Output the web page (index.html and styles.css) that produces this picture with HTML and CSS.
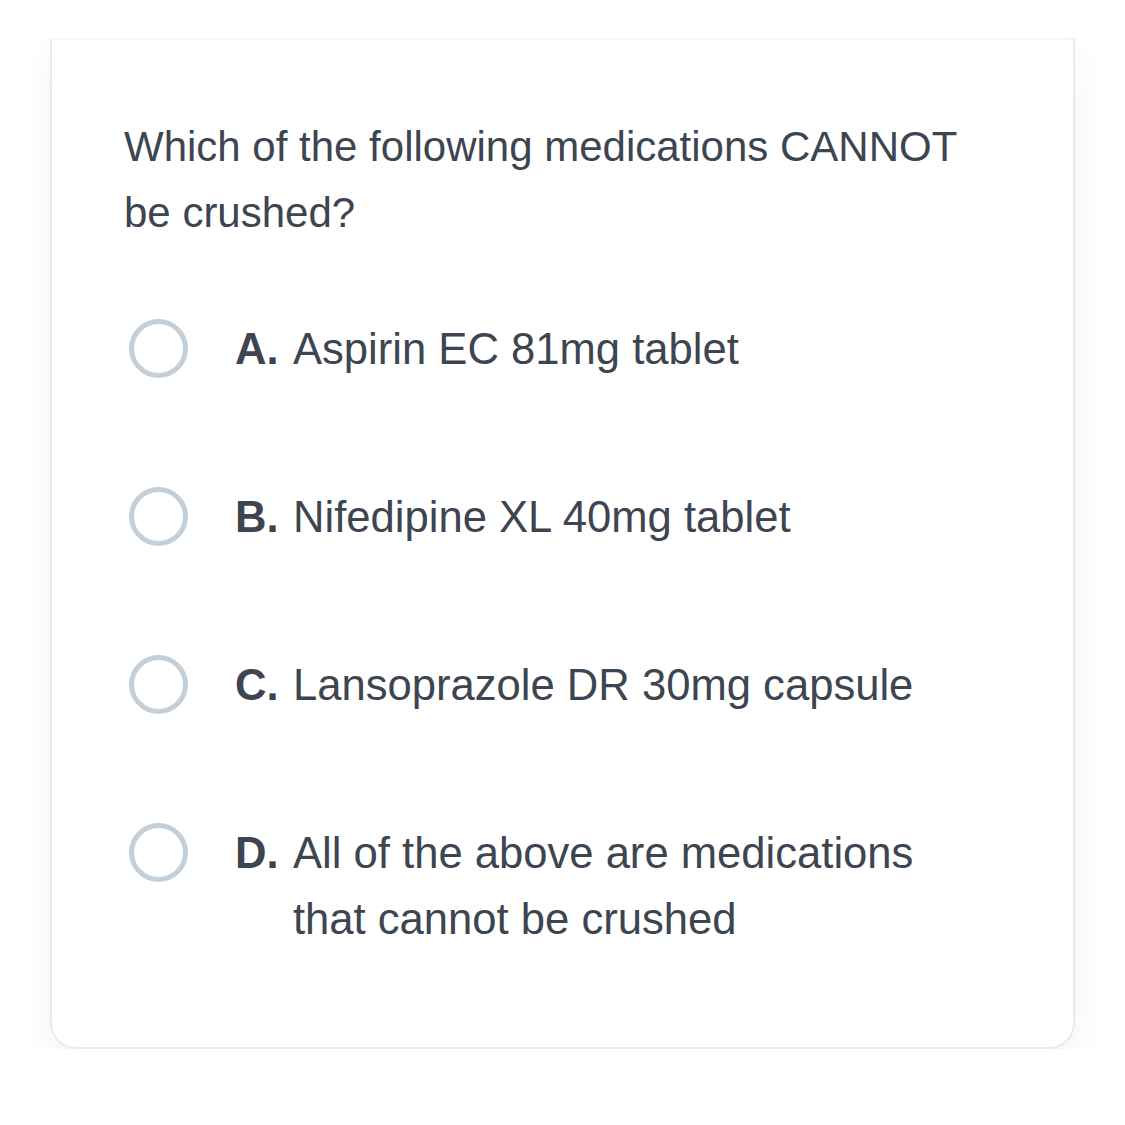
FILE: index.html
```html
<!DOCTYPE html>
<html>
<head>
<meta charset="utf-8">
<link rel="stylesheet" href="styles.css">
</head>
<body>
<div class="card">
  <p class="question">Which of the following medications CANNOT be crushed?</p>
  <div class="options">
    <div class="option"><span class="radio"></span><span class="letter">A.</span><span class="text">Aspirin EC 81mg tablet</span></div>
    <div class="option"><span class="radio"></span><span class="letter">B.</span><span class="text">Nifedipine XL 40mg tablet</span></div>
    <div class="option"><span class="radio"></span><span class="letter">C.</span><span class="text">Lansoprazole DR 30mg capsule</span></div>
    <div class="option"><span class="radio"></span><span class="letter">D.</span><span class="text">All of the above are medications that cannot be crushed</span></div>
  </div>
</div>
</body>
</html>
```
FILE: styles.css
```css
html, body {
  margin: 0;
  padding: 0;
  background: #ffffff;
}
body {
  font-family: "Liberation Sans", Arial, sans-serif;
  color: #3d4550;
}
.card {
  box-sizing: border-box;
  margin: 38px 50px 0 50px;
  height: 1011px;
  border: 2px solid #ebebeb;
  border-top: 2px solid #f6f6f6;
  border-radius: 0 0 26px 26px;
  background: #fff;
  box-shadow: 0 16px 34px rgba(0, 0, 0, 0.05);
  padding: 74px 72px 0 72px;
}
.question {
  margin: 0;
  font-size: 42px;
  line-height: 66px;
  width: 850px;
}
.options {
  margin-top: 70px;
  display: flex;
  flex-direction: column;
  gap: 102px;
}
.option {
  display: flex;
  align-items: flex-start;
  font-size: 43.6px;
  line-height: 66px;
}
.radio {
  flex: none;
  box-sizing: border-box;
  width: 59px;
  height: 59px;
  margin: 3px 0 0 5px;
  border: 5px solid #c5cfd7;
  border-radius: 50%;
}
.letter {
  flex: none;
  width: 58px;
  margin-left: 47px;
  font-weight: bold;
}
.text {
  width: 660px;
}
```
